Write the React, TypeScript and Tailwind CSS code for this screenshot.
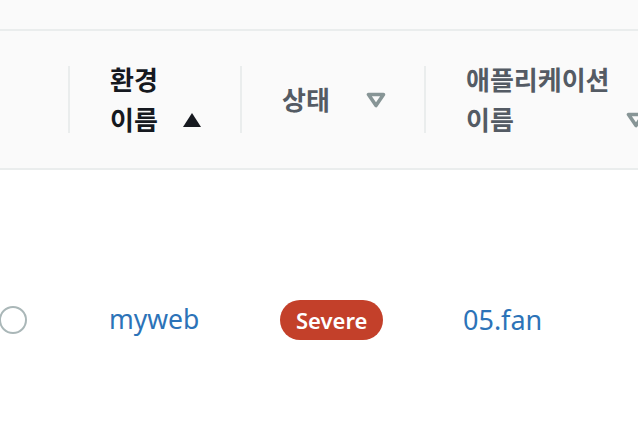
import React from "react";

const SortDown = () => (
  <svg width="20" height="16" viewBox="0 0 20 16" className="shrink-0">
    <path d="M2.5 2.5 H17.5 L10 13.5 Z" fill="none" stroke="#879596" strokeWidth="3.6" strokeLinejoin="round" />
  </svg>
);

const SortUp = () => (
  <svg width="20" height="16" viewBox="0 0 20 16" className="shrink-0">
    <path d="M1 15 H19 L10 1 Z" fill="#16191f" />
  </svg>
);

interface HeaderCellProps {
  lines: string[];
  active?: boolean;
  width: string;
}

const HeaderCell = ({ lines, active, width }: HeaderCellProps) => (
  <div className={`${width} shrink-0 flex items-center h-full`}>
    <div className="w-[2px] h-[67px] bg-[#eaeded] shrink-0" />
    <div className="flex-1 flex items-end justify-between pl-[40px] pr-[38px]">
      <div className={`leading-[40px] ${active ? "text-[#16191f]" : "text-[#545b64]"}`}>
        {lines.map((l) => (
          <div key={l}>{l}</div>
        ))}
      </div>
      <div className="h-[40px] flex items-center">{active ? <SortUp /> : <SortDown />}</div>
    </div>
  </div>
);

export default function App() {
  return (
    <div
      className="w-[638px] h-[448px] overflow-hidden bg-white"
      style={{ fontFamily: '"Noto Sans", "Noto Sans CJK KR", sans-serif' }}
    >
      <div className="h-[31px] bg-[#fafafa] border-b-2 border-[#eaeded]" />
      <div className="h-[139px] bg-[#fafafa] border-b-2 border-[#eaeded] flex items-center text-[26px] font-bold whitespace-nowrap">
        <div className="w-[68px] shrink-0" />
        <HeaderCell lines={["환경", "이름"]} active width="w-[172px]" />
        <HeaderCell lines={["상태"]} width="w-[184px]" />
        <HeaderCell lines={["애플리케이션", "이름"]} width="w-[260px]" />
      </div>
      <div className="h-[300px] flex items-center whitespace-nowrap">
        <div className="w-[68px] shrink-0 flex items-center">
          <div className="w-[28px] h-[28px] rounded-full border-2 border-[#aab7b8] -ml-px" />
        </div>
        <div className="w-[172px] shrink-0 pl-[41px] text-[26.5px] text-[#2c73b8]">myweb</div>
        <div className="w-[184px] shrink-0 pl-[40px]">
          <span className="inline-flex items-center h-[40px] px-[16px] rounded-full bg-[#c3402a] text-white text-[22px] font-semibold">
            Severe
          </span>
        </div>
        <div className="shrink-0 pl-[39px] text-[27px] text-[#2c73b8]">05.fan</div>
      </div>
    </div>
  );
}
